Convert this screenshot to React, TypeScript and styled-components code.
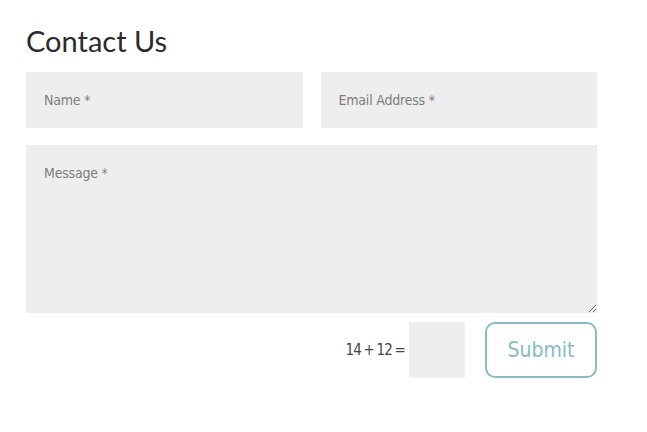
import styled, { createGlobalStyle } from "styled-components";

const GlobalStyle = createGlobalStyle`
  body {
    margin: 0;
    background: #fff;
  }
`;

const Page = styled.main`
  padding: 24px 26px;
  width: 571px;
`;

const Title = styled.h2`
  margin: 0 0 14px;
  font-family: Lato, "Open Sans", sans-serif;
  font-weight: 400;
  font-size: 29px;
  line-height: 34px;
  color: #2b2b2b;
`;

const Form = styled.form`
  display: flex;
  flex-direction: column;
  gap: 17px;
`;

const Row = styled.div`
  display: grid;
  grid-template-columns: 1fr 1fr;
  gap: 18px;
`;

const fieldCss = `
  box-sizing: border-box;
  border: none;
  outline: none;
  background: #eeeeee;
  font-family: "DejaVu Sans Condensed", "Liberation Sans Narrow", sans-serif;
  font-size: 14px;
  color: #555;
  padding: 0 18px;
  &::placeholder {
    color: #7d7d7d;
  }
`;

const Input = styled.input`
  ${fieldCss}
  height: 56px;
  width: 100%;
  letter-spacing: -0.2px;
`;

const Message = styled.textarea`
  ${fieldCss}
  height: 168px;
  width: 100%;
  padding-top: 20px;
  display: block;
  letter-spacing: -0.2px;
`;

const Footer = styled.div`
  display: flex;
  justify-content: flex-end;
  align-items: center;
  margin-top: -8px;
`;

const Sum = styled.label`
  font-family: "DejaVu Sans Condensed", "Liberation Sans Narrow", sans-serif;
  font-size: 15px;
  color: #444;
  margin-right: 4px;
  letter-spacing: -0.8px;
  word-spacing: -1px;
`;

const Answer = styled.input`
  ${fieldCss}
  width: 56px;
  height: 56px;
  padding: 0;
  margin-right: 20px;
`;

const Submit = styled.button`
  box-sizing: border-box;
  width: 112px;
  height: 56px;
  border: 2px solid #86bcc2;
  border-radius: 10px;
  background: #fff;
  color: #86bcc2;
  font-family: "DejaVu Sans Condensed", "Liberation Sans Narrow", sans-serif;
  font-size: 21px;
  cursor: pointer;
`;

function App() {
  return (
    <>
      <GlobalStyle />
      <Page>
        <Title>Contact Us</Title>
        <Form onSubmit={(e) => e.preventDefault()}>
          <Row>
            <Input placeholder="Name *" />
            <Input placeholder="Email Address *" />
          </Row>
          <Message placeholder="Message *" />
          <Footer>
            <Sum>14 + 12 =</Sum>
            <Answer />
            <Submit type="submit">Submit</Submit>
          </Footer>
        </Form>
      </Page>
    </>
  );
}

export default App;
